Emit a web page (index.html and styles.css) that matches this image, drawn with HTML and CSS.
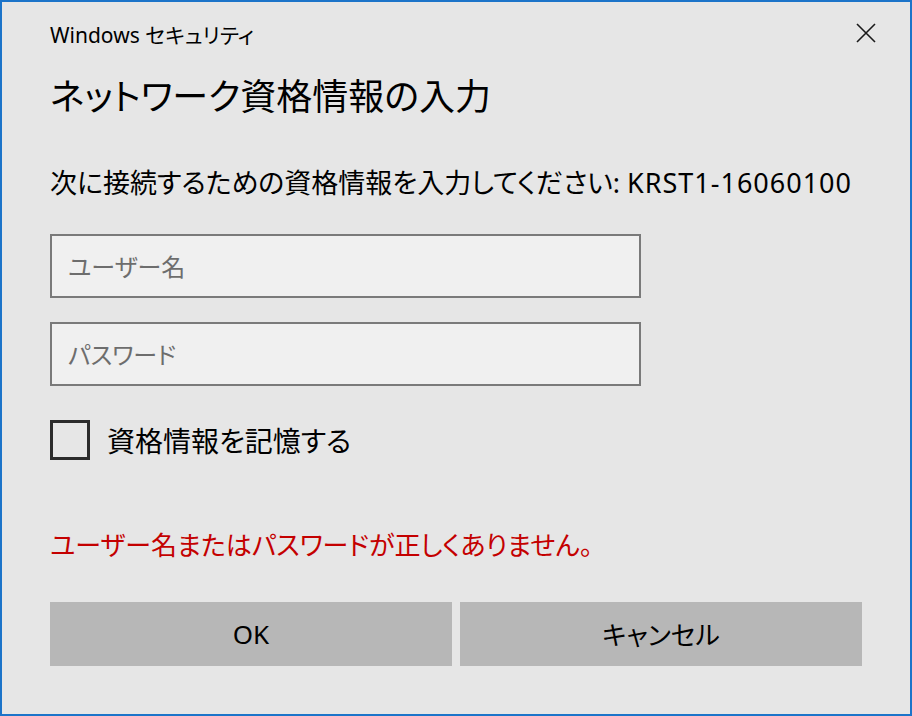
FILE: index.html
```html
<!DOCTYPE html>
<html lang="ja">
<head>
    <meta charset="UTF-8">
    <meta name="viewport" content="width=device-width, initial-scale=1.0">
    <title>Windows セキュリティ</title>
    <link rel="stylesheet" href="styles.css">
</head>
<body>
    <div class="dialog">
        <div class="title-bar">
            <span class="title">Windows セキュリティ</span>
            <button class="close-btn" aria-label="閉じる">
                <svg width="20" height="20" viewBox="0 0 20 20">
                    <path d="M1 1 L19 19 M19 1 L1 19" stroke="#1a1a1a" stroke-width="1.6" fill="none"/>
                </svg>
            </button>
        </div>

        <h1 class="heading">ネットワーク資格情報の入力</h1>
        <p class="description">次に接続するための資格情報を入力してください: <span class="host">KRST1-16060100</span></p>

        <div class="input-field">
            <input type="text" placeholder="ユーザー名">
        </div>
        <div class="input-field">
            <input type="password" placeholder="パスワード">
        </div>

        <label class="remember">
            <span class="check-box"></span>
            <span class="remember-text">資格情報を記憶する</span>
        </label>

        <p class="error">ユーザー名またはパスワードが正しくありません。</p>

        <div class="buttons">
            <button class="btn">OK</button>
            <button class="btn">キャンセル</button>
        </div>
    </div>
</body>
</html>
```

FILE: styles.css
```css
body {
    margin: 0;
    background: #e6e6e6;
    font-family: "Noto Sans", "Noto Sans CJK JP", sans-serif;
    font-feature-settings: "palt";
    color: #000;
}

.dialog {
    box-sizing: border-box;
    width: 912px;
    height: 716px;
    border: 2px solid #1c74c9;
    background-color: #e6e6e6;
    padding: 0 48px;
}

.title-bar {
    height: 66px;
    display: flex;
    align-items: center;
    justify-content: space-between;
}

.title {
    font-size: 21px;
    color: #000;
    margin-top: -3px;
}

.close-btn {
    background: none;
    border: none;
    padding: 0;
    margin-right: -14px;
    margin-top: -4px;
    width: 20px;
    height: 20px;
    cursor: pointer;
}

.heading {
    margin: 0;
    font-size: 36px;
    font-weight: normal;
    line-height: 58px;
}

.description {
    margin: 40px 0 0;
    font-size: 27px;
    line-height: 34px;
}

.host {
    letter-spacing: 1px;
}

.input-field {
    margin-top: 34px;
}

.input-field + .input-field {
    margin-top: 24px;
}

.input-field input {
    box-sizing: border-box;
    width: 591px;
    height: 64px;
    border: 2px solid #7a7a7a;
    background-color: #f0f0f0;
    padding: 0 16px;
    font-family: inherit;
    font-feature-settings: "palt";
    font-size: 24px;
    color: #000;
    outline: none;
}

.input-field input::placeholder {
    color: #6d6d6d;
}

.remember {
    margin-top: 34px;
    height: 40px;
    display: flex;
    align-items: center;
    gap: 17px;
    cursor: pointer;
}

.check-box {
    box-sizing: border-box;
    width: 40px;
    height: 40px;
    border: 3px solid #2b2b2b;
}

.remember-text {
    font-size: 28px;
}

.error {
    margin: 68px 0 0;
    font-size: 26px;
    line-height: 34px;
    color: #c40000;
}

.buttons {
    margin-top: 40px;
    display: flex;
    gap: 8px;
}

.btn {
    width: 402px;
    height: 64px;
    border: none;
    background-color: #b7b7b7;
    font-family: inherit;
    font-feature-settings: "palt";
    font-size: 26px;
    color: #000;
    cursor: pointer;
}
```
